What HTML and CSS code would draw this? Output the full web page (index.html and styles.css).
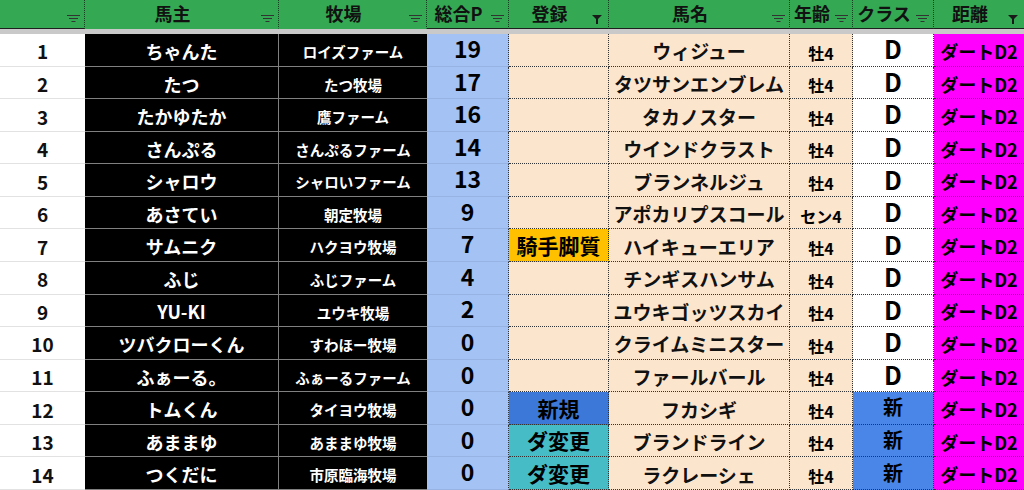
FILE: index.html
```html
<!DOCTYPE html>
<html lang="ja">
<head>
<meta charset="utf-8">
<link rel="stylesheet" href="styles.css">
</head>
<body>
<div class="sheet">
  <div class="head">
    <div class="hc hk"><svg class="flt" viewBox="0 0 13 8"><path d="M0 0.5H13M2 3.5H11M4.5 6.5H8.5" stroke="#333" stroke-width="1"/></svg></div>
    <div class="hc hn">馬主<svg class="flt" viewBox="0 0 13 8"><path d="M0 0.5H13M2 3.5H11M4.5 6.5H8.5" stroke="#333" stroke-width="1"/></svg></div>
    <div class="hc hn">牧場<svg class="flt" viewBox="0 0 13 8"><path d="M0 0.5H13M2 3.5H11M4.5 6.5H8.5" stroke="#333" stroke-width="1"/></svg></div>
    <div class="hc">総合P<svg class="flt" viewBox="0 0 13 8"><path d="M0 0.5H13M2 3.5H11M4.5 6.5H8.5" stroke="#333" stroke-width="1"/></svg></div>
    <div class="hc">登録<svg class="flt on" viewBox="0 0 10 9"><path d="M0 0H10L6 4V9H4V4Z" fill="#1a1a1a"/></svg></div>
    <div class="hc">馬名<svg class="flt" viewBox="0 0 13 8"><path d="M0 0.5H13M2 3.5H11M4.5 6.5H8.5" stroke="#333" stroke-width="1"/></svg></div>
    <div class="hc">年齢<svg class="flt" viewBox="0 0 13 8"><path d="M0 0.5H13M2 3.5H11M4.5 6.5H8.5" stroke="#333" stroke-width="1"/></svg></div>
    <div class="hc">クラス<svg class="flt" viewBox="0 0 13 8"><path d="M0 0.5H13M2 3.5H11M4.5 6.5H8.5" stroke="#333" stroke-width="1"/></svg></div>
    <div class="hc last">距離<svg class="flt on" viewBox="0 0 10 9"><path d="M0 0H10L6 4V9H4V4Z" fill="#1a1a1a"/></svg></div>
  </div>
  <div class="band"></div>
  <div class="body" id="body">
    <div class="c rk">1</div><div class="c ow">ちゃんた</div><div class="c fm">ロイズファーム</div><div class="c pt">19</div><div class="c rg"></div><div class="c hs">ウィジュー</div><div class="c ag">牡4</div><div class="c cl">D</div><div class="c ds">ダートD2</div>
    <div class="c rk">2</div><div class="c ow">たつ</div><div class="c fm">たつ牧場</div><div class="c pt">17</div><div class="c rg"></div><div class="c hs">タツサンエンブレム</div><div class="c ag">牡4</div><div class="c cl">D</div><div class="c ds">ダートD2</div>
    <div class="c rk">3</div><div class="c ow">たかゆたか</div><div class="c fm">鷹ファーム</div><div class="c pt">16</div><div class="c rg"></div><div class="c hs">タカノスター</div><div class="c ag">牡4</div><div class="c cl">D</div><div class="c ds">ダートD2</div>
    <div class="c rk">4</div><div class="c ow">さんぷる</div><div class="c fm">さんぷるファーム</div><div class="c pt">14</div><div class="c rg"></div><div class="c hs">ウインドクラスト</div><div class="c ag">牡4</div><div class="c cl">D</div><div class="c ds">ダートD2</div>
    <div class="c rk">5</div><div class="c ow">シャロウ</div><div class="c fm">シャロいファーム</div><div class="c pt">13</div><div class="c rg"></div><div class="c hs">ブランネルジュ</div><div class="c ag">牡4</div><div class="c cl">D</div><div class="c ds">ダートD2</div>
    <div class="c rk">6</div><div class="c ow">あさてい</div><div class="c fm">朝定牧場</div><div class="c pt">9</div><div class="c rg"></div><div class="c hs">アポカリプスコール</div><div class="c ag">セン4</div><div class="c cl">D</div><div class="c ds">ダートD2</div>
    <div class="c rk">7</div><div class="c ow">サムニク</div><div class="c fm">ハクヨウ牧場</div><div class="c pt">7</div><div class="c rg orange">騎手脚質</div><div class="c hs">ハイキューエリア</div><div class="c ag">牡4</div><div class="c cl">D</div><div class="c ds">ダートD2</div>
    <div class="c rk">8</div><div class="c ow">ふじ</div><div class="c fm">ふじファーム</div><div class="c pt">4</div><div class="c rg"></div><div class="c hs">チンギスハンサム</div><div class="c ag">牡4</div><div class="c cl">D</div><div class="c ds">ダートD2</div>
    <div class="c rk">9</div><div class="c ow">YU-KI</div><div class="c fm">ユウキ牧場</div><div class="c pt">2</div><div class="c rg"></div><div class="c hs">ユウキゴッツスカイ</div><div class="c ag">牡4</div><div class="c cl">D</div><div class="c ds">ダートD2</div>
    <div class="c rk">10</div><div class="c ow">ツバクローくん</div><div class="c fm">すわほー牧場</div><div class="c pt">0</div><div class="c rg"></div><div class="c hs">クライムミニスター</div><div class="c ag">牡4</div><div class="c cl">D</div><div class="c ds">ダートD2</div>
    <div class="c rk">11</div><div class="c ow">ふぁーる。</div><div class="c fm">ふぁーるファーム</div><div class="c pt">0</div><div class="c rg"></div><div class="c hs">ファールバール</div><div class="c ag">牡4</div><div class="c cl">D</div><div class="c ds">ダートD2</div>
    <div class="c rk">12</div><div class="c ow">トムくん</div><div class="c fm">タイヨウ牧場</div><div class="c pt">0</div><div class="c rg blue">新規</div><div class="c hs">フカシギ</div><div class="c ag">牡4</div><div class="c cl new">新</div><div class="c ds">ダートD2</div>
    <div class="c rk">13</div><div class="c ow">あままゆ</div><div class="c fm">あままゆ牧場</div><div class="c pt">0</div><div class="c rg teal">ダ変更</div><div class="c hs">ブランドライン</div><div class="c ag">牡4</div><div class="c cl new">新</div><div class="c ds">ダートD2</div>
    <div class="c rk">14</div><div class="c ow">つくだに</div><div class="c fm">市原臨海牧場</div><div class="c pt">0</div><div class="c rg teal">ダ変更</div><div class="c hs">ラクレーシェ</div><div class="c ag">牡4</div><div class="c cl new">新</div><div class="c ds">ダートD2</div>
  </div>
</div>
</body>
</html>
```
FILE: styles.css
```css
html, body {
  margin: 0;
  padding: 0;
  background: #ffffff;
}
body {
  width: 1024px;
  height: 490px;
  overflow: hidden;
  font-family: "Noto Sans CJK JP", "Noto Sans", sans-serif;
  font-weight: 700;
  color: #000;
}
.sheet {
  width: 1024px;
}
.head, .body {
  display: grid;
  grid-template-columns: 85px 194px 148px 82px 100px 181px 63px 81px 90px;
}
.head {
  height: 29px;
  background: #34a853;
}
.hc {
  position: relative;
  box-sizing: border-box;
  height: 29px;
  border-right: 1px dotted #1c3b24;
  border-bottom: 1px solid #1f1f1f;
  display: flex;
  align-items: center;
  justify-content: center;
  padding-right: 18px;
  font-size: 18px;
  line-height: 1.2;
  color: #111;
}
.hc.hn {
  border-bottom-color: #34a853;
}
.hc.last {
  border-right: none;
}
.flt {
  position: absolute;
  right: 4px;
  bottom: 5px;
  width: 13px;
  height: 8px;
}
.flt.on {
  width: 10px;
  height: 9px;
  right: 6px;
  bottom: 4px;
}
.band {
  height: 5px;
  background: #c9c9c9;
}
.body {
  grid-template-rows: repeat(14, 32.57px);
}
.c {
  box-sizing: border-box;
  display: flex;
  align-items: center;
  justify-content: center;
  padding-top: 4px;
  line-height: 1.2;
  white-space: nowrap;
}
.rk {
  background: #fff;
  border-bottom: 1px solid #e2e2e2;
  font-size: 19px;
  color: #111;
}
.ow {
  background: #000;
  color: #fff;
  font-size: 18px;
  border-right: 1px solid #808080;
  border-bottom: 1px solid #808080;
}
.fm {
  background: #000;
  color: #fff;
  font-size: 14.5px;
  border-bottom: 1px solid #808080;
}
.pt {
  background: #a4c2f4;
  font-size: 23px;
  border-right: 1px dotted #333;
  border-bottom: 1px solid #96b3e3;
  padding-top: 0;
  padding-bottom: 2px;
}
.rg {
  background: #fce5cd;
  font-size: 21px;
  border-right: 1px dotted #333;
  border-bottom: 1px dotted #333;
  padding-top: 1px;
}
.rg.orange { background: #ffc000; }
.rg.blue { background: #3c78d8; }
.rg.teal { background: #46bdc6; }
.hs {
  background: #fce5cd;
  font-size: 19px;
  border-right: 1px dotted #333;
  border-bottom: 1px dotted #333;
  color: #111;
}
.ag {
  background: #fce5cd;
  font-size: 16px;
  border-right: 1px dotted #333;
  border-bottom: 1px dotted #333;
  padding-top: 7px;
}
.cl {
  background: #fff;
  font-size: 25px;
  border-right: 1px dotted #333;
  border-bottom: 1px dotted #333;
  padding-top: 0;
  padding-bottom: 3px;
}
.cl.new {
  background: #4a86e8;
  font-size: 20px;
  padding-bottom: 1px;
}
.ds {
  background: #ff00ff;
  font-size: 18px;
  border-bottom: 1px dotted #333;
}
```
